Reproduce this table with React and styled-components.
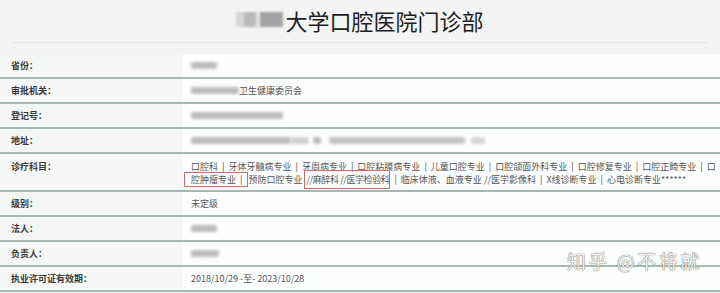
import React from "react";
import styled, { createGlobalStyle } from "styled-components";

const rows = [
  { label: "省份：", value: <Smudge w={26} /> },
  {
    label: "审批机关：",
    value: (
      <>
        <Smudge w={48} />
        卫生健康委员会
      </>
    )
  },
  { label: "登记号：", value: <Smudge w={92} /> },
  {
    label: "地址：",
    value: (
      <>
        <Smudge w={100} />
        <Smudge w={18} tone="#cfcfcf" />
        <Smudge w={8} gap={4} />
        <Smudge w={136} gap={8} tone="#c4c4c4" />
        <Smudge w={14} gap={6} tone="#d6d6d6" />
      </>
    )
  }
];

const rowsAfter = [
  { label: "级别：", value: "未定级" },
  { label: "法人：", value: <Smudge w={26} /> },
  { label: "负责人：", value: <Smudge w={28} /> },
  { label: "执业许可证有效期：", value: "2018/10/29 -至- 2023/10/28" }
];

export default function App() {
  return (
    <Page>
      <GlobalStyle />
      <Header>
        <Title>
          <TitleSmudge />
          大学口腔医院门诊部
        </Title>
      </Header>
      <Divider />
      <Table>
        {rows.map(r => (
          <Row key={r.label}>
            <Label>{r.label}</Label>
            <Value>{r.value}</Value>
          </Row>
        ))}
        <Row tall>
          <Label top>诊疗科目：</Label>
          <Value multi>
            <Line>
              口腔科<Sep>|</Sep>牙体牙髓病专业<Sep>|</Sep>牙周病专业<Sep>|</Sep>
              口腔粘膜病专业<Sep>|</Sep>儿童口腔专业<Sep>|</Sep>口腔颌面外科专业
              <Sep>|</Sep>口腔修复专业<Sep>|</Sep>口腔正畸专业<Sep>|</Sep>口
            </Line>
            <Line>
              <Marked first>
                腔肿瘤专业<Sep>|</Sep>
              </Marked>
              预防口腔专业 <Marked tall>//麻醉科 //医学检验科</Marked>
              <Sep>|</Sep>临床体液、血液专业 //医学影像科<Sep>|</Sep>X线诊断专业
              <Sep>|</Sep>心电诊断专业******
            </Line>
          </Value>
        </Row>
        {rowsAfter.map(r => (
          <Row key={r.label}>
            <Label>{r.label}</Label>
            <Value>{r.value}</Value>
          </Row>
        ))}
      </Table>
      <Watermark>知乎 @不将就</Watermark>
    </Page>
  );
}

function Smudge({ w, gap = 0, tone = "#bdbdbd" }) {
  return <SmudgeBox style={{ width: w, marginLeft: gap }} $tone={tone} />;
}

const GlobalStyle = createGlobalStyle`
  html, body {
    margin: 0;
    padding: 0;
    background: #f4f4f4;
  }
  body {
    font-family: "Noto Sans CJK SC", "Liberation Sans", sans-serif;
  }
`;

const Page = styled.div`
  position: relative;
  width: 720px;
  height: 293px;
  overflow: hidden;
  background: #f4f4f4;
`;

const Header = styled.div`
  height: 42px;
  display: flex;
  justify-content: center;
  align-items: center;
`;

const Title = styled.h1`
  margin: -3px 0 0;
  display: flex;
  align-items: center;
  font-size: 22px;
  font-weight: normal;
  line-height: 26px;
  color: #1e1e1e;
`;

const TitleSmudge = styled.span`
  display: inline-block;
  width: 47px;
  height: 15px;
  margin-right: 2px;
  background: linear-gradient(
    90deg,
    #d6d6d6 0 18%,
    #b9b9b9 18% 42%,
    #e4e4e4 42% 52%,
    #a4a4a4 52% 100%
  );
  filter: blur(1px);
`;

const Divider = styled.div`
  height: 1px;
  margin: 0 12px 11px;
  background: #e6e6e6;
`;

const Table = styled.div`
  display: flex;
  flex-direction: column;
`;

const Row = styled.div`
  display: grid;
  grid-template-columns: 183px 1fr;
  height: ${({ tall }) => (tall ? "36px" : "23px")};
  border-bottom: 2px solid #a6b8b1;
  font-size: 9px;
`;

const Label = styled.div`
  display: flex;
  align-items: ${({ top }) => (top ? "flex-start" : "center")};
  padding: ${({ top }) => (top ? "6px 0 0 11px" : "0 0 0 11px")};
  background: #f5f7f6;
  color: #3a3a3a;
  font-weight: bold;
  line-height: 13px;
`;

const Value = styled.div`
  display: flex;
  flex-direction: ${({ multi }) => (multi ? "column" : "row")};
  align-items: ${({ multi }) => (multi ? "flex-start" : "center")};
  padding: ${({ multi }) => (multi ? "6px 0 0 8px" : "0 0 0 8px")};
  background: #fdfefe;
  color: #555;
  white-space: nowrap;
`;

const Line = styled.div`
  line-height: 13px;
  height: 13px;
`;

const Sep = styled.span`
  margin: 0 4px;
  color: #444;
`;

const Marked = styled.span`
  border: 1px solid #d46b6b;
  padding: ${({ tall }) => (tall ? "2px 0 2px 1px" : "0 1px 0 6px")};
  margin-left: ${({ first }) => (first ? "-7px" : "0")};
  letter-spacing: ${({ tall }) => (tall ? "-0.4px" : "0")};
`;

const SmudgeBox = styled.span`
  display: inline-block;
  height: 7px;
  border-radius: 2px;
  background: ${({ $tone }) => $tone};
  filter: blur(1.5px);
`;

const Watermark = styled.div`
  position: absolute;
  left: 567px;
  top: 249px;
  font-size: 19px;
  line-height: 24px;
  color: rgba(255, 255, 255, 0.92);
  text-shadow: 0 0 1px #6f6f6f, 0 0 1px #6f6f6f;
  letter-spacing: 2.5px;
`;
